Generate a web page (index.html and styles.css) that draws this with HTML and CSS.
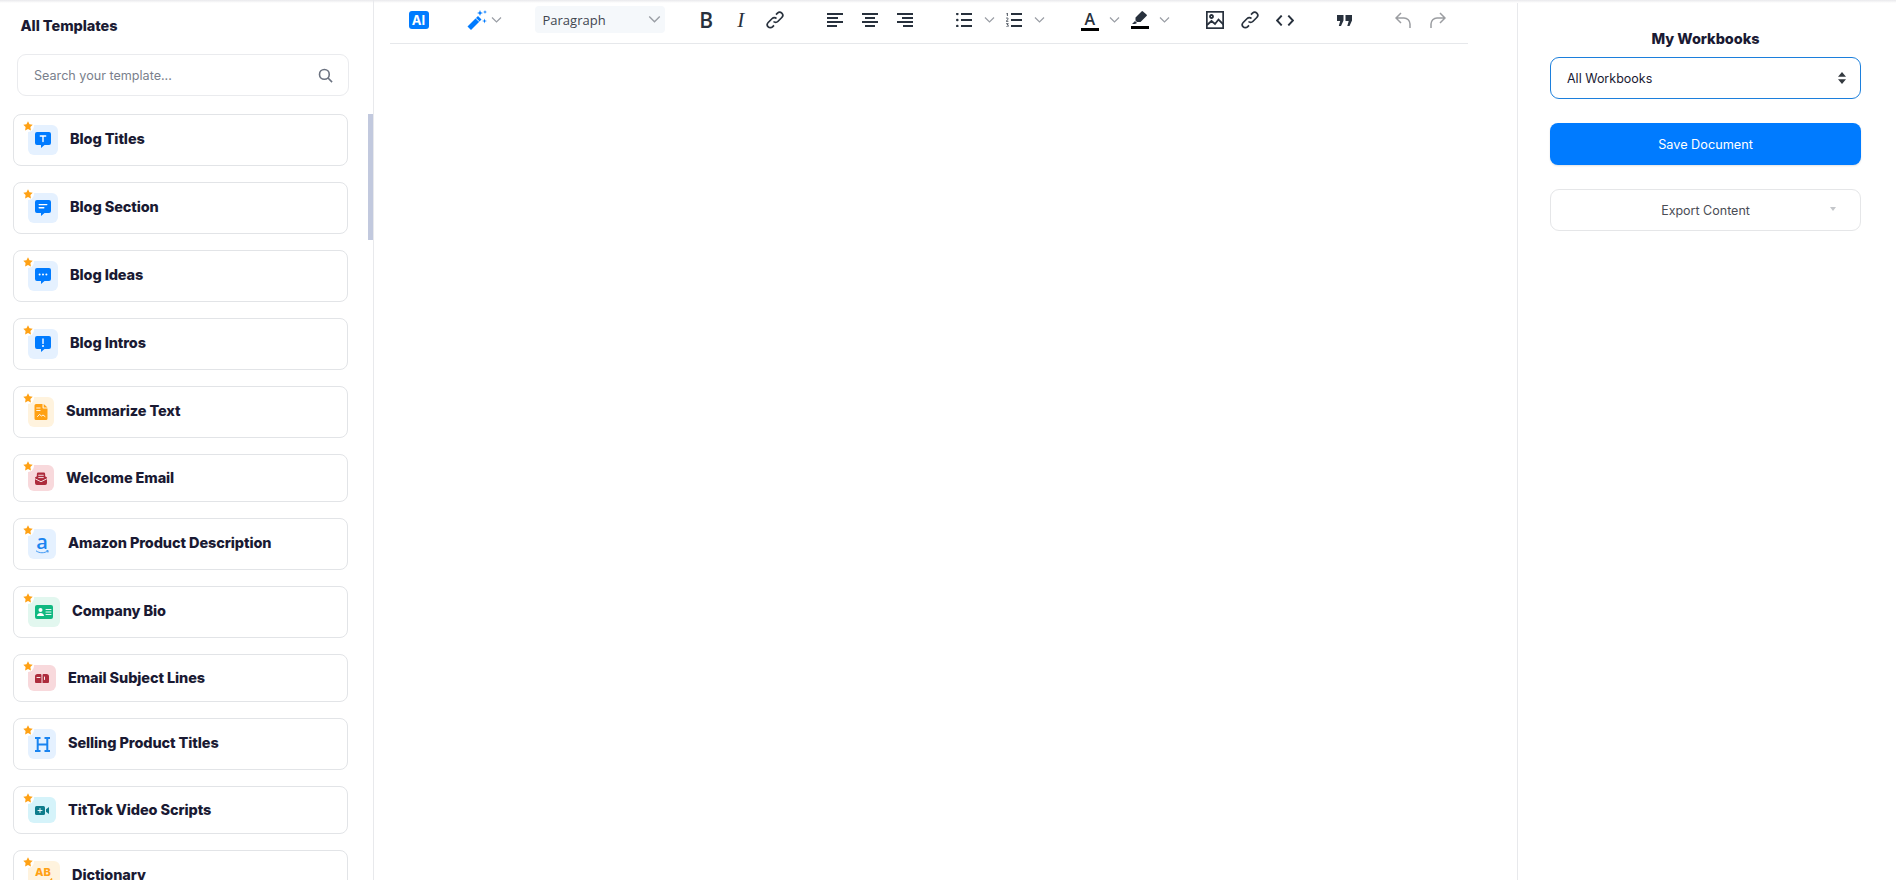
FILE: index.html
```html
<!DOCTYPE html>
<html lang="en">
<head>
<meta charset="utf-8">
<title>Document editor</title>
<link rel="stylesheet" href="styles.css">
</head>
<body>
<div class="app">
  <aside class="sidebar">
    <h2 class="side-title">All Templates</h2>
    <div class="search">
      <span class="search-text">Search your template...</span>
      <svg class="search-icon" viewBox="0 0 16 16"><circle cx="6.8" cy="6.8" r="5.2"/><path d="M10.7 10.7 15 15"/></svg>
    </div>
    <div class="list">
      <div class="card"><span class="star"><svg viewBox="0 0 10 10"><path d="M5 .3l1.5 3 3.2.5-2.300 2.300.5 3.300L5 7.900 2.100 9.400l.5-3.300L.300 3.800l3.200-.5z"/></svg></span>
        <span class="ico w30 h30 blue"><svg viewBox="0 0 16 16"><path class="fb" d="M2 0h12a2 2 0 0 1 2 2v9a2 2 0 0 1-2 2H9.500L6 16v-3H2a2 2 0 0 1-2-2V2a2 2 0 0 1 2-2z"/><path class="ln" d="M5.300 4h5.400M8 4v5.600"/></svg></span>
        <span class="name">Blog Titles</span></div>
      <div class="card"><span class="star"><svg viewBox="0 0 10 10"><path d="M5 .3l1.5 3 3.2.5-2.300 2.300.5 3.300L5 7.900 2.100 9.400l.5-3.300L.300 3.800l3.200-.5z"/></svg></span>
        <span class="ico w30 h30 blue"><svg viewBox="0 0 16 16"><path class="fb" d="M2 0h12a2 2 0 0 1 2 2v9a2 2 0 0 1-2 2H9.500L6 16v-3H2a2 2 0 0 1-2-2V2a2 2 0 0 1 2-2z"/><path class="ln" d="M4.200 4.600h7.600M4.200 7.800h4.600"/></svg></span>
        <span class="name">Blog Section</span></div>
      <div class="card"><span class="star"><svg viewBox="0 0 10 10"><path d="M5 .3l1.5 3 3.2.5-2.300 2.300.5 3.300L5 7.900 2.100 9.400l.5-3.300L.300 3.800l3.200-.5z"/></svg></span>
        <span class="ico w30 h30 blue"><svg viewBox="0 0 16 16"><path class="fb" d="M2 0h12a2 2 0 0 1 2 2v9a2 2 0 0 1-2 2H9.500L6 16v-3H2a2 2 0 0 1-2-2V2a2 2 0 0 1 2-2z"/><circle class="dot" cx="4.600" cy="6.400" r="1"/><circle class="dot" cx="8" cy="6.400" r="1"/><circle class="dot" cx="11.400" cy="6.400" r="1"/></svg></span>
        <span class="name">Blog Ideas</span></div>
      <div class="card"><span class="star"><svg viewBox="0 0 10 10"><path d="M5 .3l1.5 3 3.2.5-2.300 2.300.5 3.300L5 7.900 2.100 9.400l.5-3.300L.300 3.800l3.200-.5z"/></svg></span>
        <span class="ico w30 h30 blue"><svg viewBox="0 0 16 16"><path class="fb" d="M2 0h12a2 2 0 0 1 2 2v9a2 2 0 0 1-2 2H9.500L6 16v-3H2a2 2 0 0 1-2-2V2a2 2 0 0 1 2-2z"/><path class="ln" d="M8 3v4.400"/><circle class="dot" cx="8" cy="10" r="1"/></svg></span>
        <span class="name">Blog Intros</span></div>
      <div class="card"><span class="star"><svg viewBox="0 0 10 10"><path d="M5 .3l1.5 3 3.2.5-2.300 2.300.5 3.300L5 7.900 2.100 9.400l.5-3.300L.300 3.800l3.200-.5z"/></svg></span>
        <span class="ico w26 h30 amber"><svg viewBox="0 0 13 16"><path class="fa" d="M1.500 0H8v3.500a1 1 0 0 0 1 1h4V14.500a1.500 1.500 0 0 1-1.500 1.500h-10A1.500 1.500 0 0 1 0 14.500v-13A1.500 1.500 0 0 1 1.500 0zM9.200 0 13 3.400H9.200z"/><path class="ln thin" d="M2.200 4h3.400M2.200 6.500h3.400M3 12.500l2-2 2 1.500 1.500-1 2 1.500"/></svg></span>
        <span class="name">Summarize Text</span></div>
      <div class="card"><span class="star"><svg viewBox="0 0 10 10"><path d="M5 .3l1.5 3 3.2.5-2.300 2.300.5 3.300L5 7.900 2.100 9.400l.5-3.300L.300 3.800l3.200-.5z"/></svg></span>
        <span class="ico w26 h26 red"><svg class="s12" viewBox="0 0 13 14"><path class="fr" d="M0 6 2 4.500V2A1.500 1.500 0 0 1 3.500.5h6A1.500 1.500 0 0 1 11 2v2.500L13 6v6a2 2 0 0 1-2 2H2a2 2 0 0 1-2-2z"/><path class="ln thin" d="M4 3.500h5M4 6h5M.5 7.500l6 3 6-3"/></svg></span>
        <span class="name">Welcome Email</span></div>
      <div class="card"><span class="star"><svg viewBox="0 0 10 10"><path d="M5 .3l1.5 3 3.2.5-2.300 2.300.5 3.300L5 7.900 2.100 9.400l.5-3.300L.300 3.800l3.200-.5z"/></svg></span>
        <span class="ico w28 h30 blue stack"><span class="amz">a</span><svg class="smile" viewBox="0 0 14 5"><path d="M1 .8c3.500 2.600 8.500 2.600 12 0M11.300.8 13.200.7 12.900 2.600"/></svg></span>
        <span class="name">Amazon Product Description</span></div>
      <div class="card"><span class="star"><svg viewBox="0 0 10 10"><path d="M5 .3l1.5 3 3.2.5-2.300 2.300.5 3.300L5 7.900 2.100 9.400l.5-3.300L.300 3.800l3.200-.5z"/></svg></span>
        <span class="ico w32 h30 green"><svg class="wide" viewBox="0 0 18 14"><rect class="fg" width="18" height="14" rx="2"/><circle class="dot" cx="5.500" cy="5" r="2"/><path class="dot" d="M2 11c0-4 7-4 7 0z"/><path class="ln thin" d="M11 4.500h5M11 7h5M11 9.500h5"/></svg></span>
        <span class="name">Company Bio</span></div>
      <div class="card"><span class="star"><svg viewBox="0 0 10 10"><path d="M5 .3l1.5 3 3.2.5-2.300 2.300.5 3.300L5 7.900 2.100 9.400l.5-3.300L.300 3.800l3.200-.5z"/></svg></span>
        <span class="ico w28 h26 red"><svg class="s14" viewBox="0 0 14 9"><path class="fr" d="M2.500 0h3A2.500 2.500 0 0 1 7 1 2.500 2.500 0 0 1 8.500 0h3A2.500 2.500 0 0 1 14 2.500V8a1 1 0 0 1-1 1H1a1 1 0 0 1-1-1V2.500A2.500 2.500 0 0 1 2.500 0z"/><path class="ln thin" d="M7 .5V9M2 3.500h3M9.500 3v2.500"/></svg></span>
        <span class="name">Email Subject Lines</span></div>
      <div class="card"><span class="star"><svg viewBox="0 0 10 10"><path d="M5 .3l1.5 3 3.2.5-2.300 2.300.5 3.300L5 7.900 2.100 9.400l.5-3.300L.300 3.800l3.200-.5z"/></svg></span>
        <span class="ico w28 h30 blue"><svg class="hsvg" viewBox="0 0 15 15"><path class="hh" d="M0 1h5.500M9.500 1H15M0 14h5.500M9.500 14H15M2.700 1v13M12.300 1v13M2.700 7.500h9.600"/></svg></span>
        <span class="name">Selling Product Titles</span></div>
      <div class="card"><span class="star"><svg viewBox="0 0 10 10"><path d="M5 .3l1.5 3 3.2.5-2.300 2.300.5 3.300L5 7.900 2.100 9.400l.5-3.300L.300 3.800l3.200-.5z"/></svg></span>
        <span class="ico w28 h26 cyan"><svg class="s14" viewBox="0 0 14 9"><rect class="ft" width="10" height="9" rx="1.500"/><path class="ft" d="M11 3.200 14 1v7l-3-2.200z"/><path class="ln thin" d="M3 4.500h4M5 2.500v4"/></svg></span>
        <span class="name">TitTok Video Scripts</span></div>
      <div class="card"><span class="star"><svg viewBox="0 0 10 10"><path d="M5 .3l1.5 3 3.2.5-2.300 2.300.5 3.300L5 7.900 2.100 9.400l.5-3.300L.300 3.800l3.200-.5z"/></svg></span>
        <span class="ico w32 h30 amber stack-ab"><span class="ab">AB</span><svg class="abcheck" viewBox="0 0 8 6"><path d="M1 3.500 3 5.500 7 .5"/></svg></span>
        <span class="name">Dictionary</span></div>
    </div>
    <span class="thumb"></span>
  </aside>

  <main class="editor">
    <div class="toolbar">
      <div class="group"><span class="btn"><span class="ai">AI</span></span></div>
      <div class="group wand-group">
        <svg class="wand" viewBox="0 0 20 20"><path d="M.5 16.500 11 6l3.500 3.500L4 20z" fill="#007bff"/><path d="M8.800 8.200l3.500 3.500" stroke="#fff" stroke-width="1"/><path d="M13 0l.8 2.200 2.200.8-2.200.8L13 6l-.8-2.200L10 3l2.200-.8zM18 0l.5 1.500 1.500.5-1.500.5L18 4l-.5-1.500L16 2l1.500-.5zM17.500 8.500l.6 1.900 1.900.6-1.900.6-.6 1.900-.6-1.900L15 11l1.900-.6z" fill="#007bff"/></svg>
        <svg class="chev" viewBox="0 0 10 6"><path d="M.5.5 5 5 9.500.5"/></svg>
      </div>
      <div class="para"><span>Paragraph</span><svg class="chev" viewBox="0 0 10 6"><path d="M.5.5 5 5 9.500.5"/></svg></div>
      <div class="group narrow">
        <span class="btn"><span class="bold">B</span></span>
        <span class="btn"><span class="ital">I</span></span>
        <span class="btn"><svg class="ti link" viewBox="0 0 18 18"><path d="M7.500 10.500a3 3 0 0 0 4.300 0l4-4a3 3 0 0 0-4.300-4.300l-1.500 1.500M10.500 7.500a3 3 0 0 0-4.300 0l-4 4a3 3 0 0 0 4.300 4.300l1.500-1.500"/></svg></span>
      </div>
      <div class="group">
        <span class="btn"><svg class="ti lines" viewBox="0 0 16 14"><path d="M0 1h16M0 5h11M0 9h16M0 13h10"/></svg></span>
        <span class="btn"><svg class="ti lines" viewBox="0 0 16 14"><path d="M0 1h16M3 5h10M0 9h16M3 13h10"/></svg></span>
        <span class="btn"><svg class="ti lines" viewBox="0 0 16 14"><path d="M0 1h16M5 5h11M0 9h16M6 13h10"/></svg></span>
      </div>
      <div class="group">
        <span class="btn"><svg class="ti lines" viewBox="0 0 16 14"><path d="M5 1h11M5 7h11M5 13h11"/><circle class="fk" cx="1.300" cy="1" r="1.300"/><circle class="fk" cx="1.300" cy="7" r="1.300"/><circle class="fk" cx="1.300" cy="13" r="1.300"/></svg></span>
        <span class="cbtn"><svg class="chev" viewBox="0 0 10 6"><path d="M.5.5 5 5 9.500.5"/></svg></span>
        <span class="btn"><svg class="ti lines" viewBox="0 0 16 14"><path d="M5 1h11M5 7h11M5 13h11"/><path class="num" d="M.5.700 1.400 0v3M0 5.500c.4-.8 2.300-.7 2.200.4 0 .8-1.500 1.300-2.100 2.400h2.300M.1 10.700h2.200L1.200 12c1.600-.2 1.600 2-.1 2H0"/></svg></span>
        <span class="cbtn"><svg class="chev" viewBox="0 0 10 6"><path d="M.5.5 5 5 9.500.5"/></svg></span>
      </div>
      <div class="group nudge">
        <span class="btn"><span class="color-a">A</span></span>
        <span class="cbtn"><svg class="chev" viewBox="0 0 10 6"><path d="M.5.5 5 5 9.500.5"/></svg></span>
        <span class="btn"><span class="color-h"><svg viewBox="0 0 16 13"><path class="fk" d="M11 .5l3.500 3a1 1 0 0 1 0 1.500L8.500 11H5L3.500 9.500v-3L9.500.5a1 1 0 0 1 1.500 0zM3 10l2 2-2 1H0z"/></svg></span></span>
        <span class="cbtn"><svg class="chev" viewBox="0 0 10 6"><path d="M.5.5 5 5 9.500.5"/></svg></span>
      </div>
      <div class="group nudge">
        <span class="btn"><svg class="ti image" viewBox="0 0 18 18"><rect x=".8" y=".8" width="16.400" height="16.400"/><circle cx="5.500" cy="5.500" r="1.500"/><path d="M1 14l4.500-4 3.500 3 3.500-4.500 5 5"/></svg></span>
        <span class="btn"><svg class="ti link" viewBox="0 0 18 18"><path d="M7.500 10.500a3 3 0 0 0 4.300 0l4-4a3 3 0 0 0-4.300-4.300l-1.500 1.500M10.500 7.500a3 3 0 0 0-4.300 0l-4 4a3 3 0 0 0 4.300 4.300l1.500-1.500"/></svg></span>
        <span class="btn"><svg class="ti code" viewBox="0 0 16 10"><path d="M5 .5.800 5 5 9.500M11 .5 15.200 5 11 9.500"/></svg></span>
      </div>
      <div class="group">
        <span class="btn"><svg class="quote" viewBox="0 0 15 11"><path d="M0 0h6.500v5.500L4 11H1.800l1.400-5H0zM8.500 0H15v5.500L12.500 11h-2.200l1.400-5H8.500z"/></svg></span>
      </div>
      <div class="group back">
        <span class="btn"><svg class="ti hist" viewBox="0 0 16 17"><path d="M6 1 1 6l5 5M1 6h8a6 6 0 0 1 6 6v4"/></svg></span>
        <span class="btn"><svg class="ti hist" viewBox="0 0 16 17"><path d="M10 1l5 5-5 5M15 6H7a6 6 0 0 0-6 6v4"/></svg></span>
      </div>
    </div>
  </main>

  <aside class="panel">
    <h2 class="panel-title">My Workbooks</h2>
    <div class="select">
      <span>All Workbooks</span>
      <svg class="updown" viewBox="0 0 8 12"><path d="M4 0l4 4.800H0zM4 12 0 7.200h8z"/></svg>
    </div>
    <button class="save" type="button">Save Document</button>
    <div class="export"><span>Export Content</span><i class="caret"></i></div>
  </aside>
</div>
</body>
</html>
```
FILE: styles.css
```css
* { box-sizing: border-box; }
html, body { margin: 0; height: 100%; overflow: hidden; background: #fff; }
body { font-family: Inter, "Liberation Sans", sans-serif; color: #1a1a33; }
.app { display: flex; height: 880px; position: relative; }
.app::before { content: ""; position: absolute; left: 0; right: 0; top: 0; height: 3px; background: linear-gradient(#e9e9ec, #fff); }

.sidebar { width: 374px; flex: none; border-right: 1px solid #e8e9ec; position: relative; overflow: hidden; padding-top: 17px; }
.side-title { margin: 0 0 19px 20.500px; font-size: 14.500px; line-height: 18px; font-weight: 800; letter-spacing: -.05px; }
.search { margin-left: 17px; width: 332px; height: 42px; border: 1px solid #eaebee; border-radius: 9px; display: flex; align-items: center; justify-content: space-between; padding: 0 15px 0 16px; }
.search-text { font-size: 12.600px; color: #7a7f8c; }
.search-icon { width: 15px; height: 15px; fill: none; stroke: #6b7280; stroke-width: 1.700; }
.list { margin: 18px 0 0 13px; width: 335px; display: flex; flex-direction: column; gap: 16px; }
.card { position: relative; flex: none; display: flex; align-items: flex-start; gap: 12px; padding: 10px 14px; border: 1px solid #e2e4e7; border-radius: 8px; background: #fff; }
.star { position: absolute; left: 8px; top: 5px; width: 12px; height: 12px; padding: 1px; background: #fff; border-radius: 50%; z-index: 1; }
.star svg { display: block; width: 10px; height: 10px; fill: #ffa114; }
.ico { flex: none; display: flex; align-items: center; justify-content: center; border-radius: 6px; }
.ico svg { width: 16px; height: 16px; }
.ico svg.wide { width: 18px; height: 14px; }
.ico svg.s12 { width: 12px; height: 13px; }
.ico svg.s14 { width: 14px; height: 9px; }
.ico svg.hsvg { width: 15px; height: 15px; }
.w26 { width: 26px; } .w28 { width: 28px; } .w30 { width: 30px; } .w32 { width: 32px; }
.h26 { height: 26px; } .h30 { height: 30px; }
.blue { background: #e5f1ff; } .amber { background: #fff3de; } .red { background: #f8d9dc; } .green { background: #e2f7ef; } .cyan { background: #d5f3fa; }
.fb { fill: #007bff; } .fa { fill: #ffa114; } .fr { fill: #ad2b3c; } .fg { fill: #10b981; } .ft { fill: #0e7c8c; }
.ln { fill: none; stroke: #fff; stroke-width: 1.400; stroke-linecap: round; }
.ln.thin { stroke-width: .9; }
.dot { fill: #fff; }
.stack { flex-direction: column; gap: 0; }
.amz { font: 600 20px/16px "Open Sans", sans-serif; color: #1a84f0; }
.ico svg.smile { width: 14px; height: 5px; fill: none; stroke: #1a84f0; stroke-width: .8; }
.hh { fill: none; stroke: #1a84f0; stroke-width: 2; }
.stack-ab { flex-direction: column; justify-content: flex-start; align-items: flex-start; padding: 6px 0 0 7px; }
.ab { font-size: 11px; font-weight: 800; color: #ffa114; line-height: 11px; }
.ico svg.abcheck { width: 8px; height: 6px; margin-left: 10px; fill: none; stroke: #ffa114; stroke-width: 1.500; }
.name { font-size: 14.500px; line-height: 28px; font-weight: 800; letter-spacing: -.1px; white-space: nowrap; }
.card:has(.h26) .name { line-height: 25px; }
.thumb { position: absolute; left: 368px; top: 114px; width: 5px; height: 126px; background: #c2c9de; }

.editor { flex: none; width: 1144px; border-right: 1px solid #e8e9ec; padding-left: 16px; }
.toolbar { width: 1078px; height: 44px; padding: 0 0 0 11px; border-bottom: 1px solid #e6e8eb; display: flex; align-items: flex-start; gap: 24.500px; font-family: "Open Sans", sans-serif; }
.group { display: flex; align-items: center; height: 40px; }
.narrow .btn { width: 34.500px; }
.nudge { margin-left: 1.200px; }
.back { margin-left: -1.200px; }
.btn { width: 35px; height: 40px; display: flex; align-items: center; justify-content: center; }
.cbtn { width: 15px; height: 40px; display: flex; align-items: center; justify-content: center; }
.ai { width: 20px; height: 18px; border-radius: 3px; background: #007bff; color: #fff; font: 700 13px/18px Inter, sans-serif; text-align: center; }
.wand-group { width: 49.500px; }
.wand { width: 20px; height: 20px; flex: none; margin-left: 6px; }
.wand-group .chev { margin-left: 4px; }
.chev { width: 11px; height: 6px; flex: none; fill: none; stroke: #9a9ea5; stroke-width: 1.200; }
.para { width: 130px; height: 27px; margin-top: 6px; background: #f5f8fb; border-radius: 4px; display: flex; align-items: center; justify-content: space-between; padding: 0 4px 0 8px; font-size: 13px; color: #3f4650; }
.para .chev { width: 13px; height: 7px; }
.bold { font: 600 21px/1 "Open Sans", sans-serif; color: #28313d; }
.ital { font: italic 400 21px/1 "Liberation Serif", serif; color: #28313d; }
.ti { width: 18px; height: 18px; fill: none; stroke: #28313d; stroke-width: 1.500; }
.ti.link { stroke-width: 1.700; }
.ti.image { stroke-width: 1.800; }
.ti.lines { width: 16px; height: 14px; stroke-width: 1.800; }
.fk { fill: #28313d; stroke: none; }
.num { stroke-width: .8; }
.code { height: 11px; stroke-width: 1.700; }
.quote { width: 15px; height: 11px; fill: #28313d; }
.hist { stroke: #9b9da1; width: 16px; height: 17px; }
.color-a { width: 18px; font: 600 16px/18px "Open Sans", sans-serif; color: #28313d; text-align: center; border-bottom: 3px solid #000; }
.color-h { width: 18px; display: block; border-bottom: 3px solid #000; height: 18px; }
.color-h svg { display: block; width: 16px; height: 13px; margin-left: 1px; }

.panel { flex: 1; padding: 30px 35px 0 32px; display: flex; flex-direction: column; }
.panel-title { margin: 0 0 9px; text-align: center; font-size: 14.500px; line-height: 18px; font-weight: 800; letter-spacing: -.05px; }
.select { height: 42px; border: 1px solid #1c7fdc; border-radius: 9px; display: flex; align-items: center; justify-content: space-between; padding: 0 14px 0 16px; font-size: 12.500px; color: #1a1a33; }
.updown { width: 8px; height: 12px; fill: #343a40; }
.save { margin-top: 24px; height: 42px; border: 0; border-radius: 8px; background: #007bff; color: #fff; font: 400 12.700px Inter, sans-serif; box-shadow: 0 1px 2px rgba(0,0,0,.12); }
.export { margin-top: 24px; height: 42px; border: 1px solid #e5e6e8; border-radius: 9px; display: flex; align-items: center; justify-content: center; position: relative; font-size: 12.500px; color: #4a4d55; }
.caret { position: absolute; right: 24px; top: 17px; border: 3px solid transparent; border-top: 4px solid #c4c6ca; border-bottom: 0; }
```
